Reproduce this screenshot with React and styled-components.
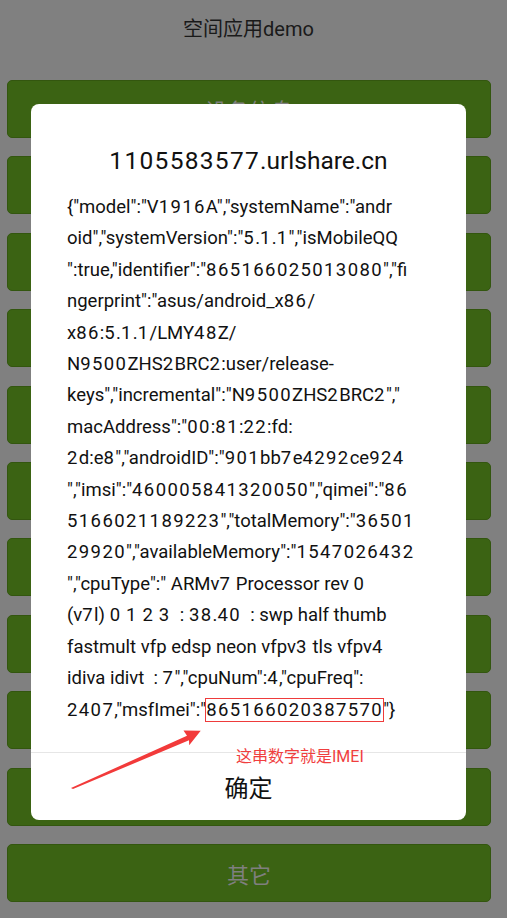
import React from 'react';
import styled, { createGlobalStyle } from 'styled-components';

const GlobalStyle = createGlobalStyle`
  html, body {
    margin: 0;
    padding: 0;
    background: #808080;
    font-family: Roboto, "Noto Sans CJK SC", sans-serif;
  }
`;

// only the first and the last button peek out from behind the dialog
const buttons = ['设备信息', '', '', '', '', '', '', '', '', '', '其它'];

const lines = [
  '{"model":"V1916A","systemName":"andr',
  'oid","systemVersion":"5.1.1","isMobileQQ',
  '":true,"identifier":"865166025013080","fi',
  'ngerprint":"asus/android_x86/',
  'x86:5.1.1/LMY48Z/',
  'N9500ZHS2BRC2:user/release-',
  'keys","incremental":"N9500ZHS2BRC2","',
  'macAddress":"00:81:22:fd:',
  '2d:e8","androidID":"901bb7e4292ce924',
  '","imsi":"460005841320050","qimei":"86',
  '5166021189223","totalMemory":"36501',
  '29920","availableMemory":"1547026432',
  '","cpuType":" ARMv7 Processor rev 0',
  '(v7l) 0 1 2 3  : 38.40  : swp half thumb',
  'fastmult vfp edsp neon vfpv3 tls vfpv4',
  'idiva idivt  : 7","cpuNum":4,"cpuFreq":',
];

const Page = styled.div`
  position: relative;
  width: 507px;
  height: 918px;
  overflow: hidden;
  background: #808080;
`;

const Header = styled.div`
  height: 55px;
  padding-right: 10px;
  display: flex;
  align-items: center;
  justify-content: center;
  font-size: 20px;
  color: #1a1a1a;
`;

const ButtonList = styled.div`
  display: flex;
  flex-direction: column;
  gap: 18.4px;
  padding: 25px 16px 0 7px;
`;

const GreenButton = styled.div`
  height: 58px;
  box-sizing: border-box;
  border: 1px solid #33560f;
  border-radius: 5px;
  background: #3b6313;
  color: #7f7f7f;
  font-size: 22px;
  display: flex;
  align-items: center;
  justify-content: center;
`;

const Overlay = styled.div`
  position: absolute;
  inset: 0;
  padding: 104px 0 0 31px;
`;

const Dialog = styled.div`
  width: 435px;
  height: 716px;
  box-sizing: border-box;
  background: #fff;
  border-radius: 8px;
  display: flex;
  flex-direction: column;
`;

const DialogTitle = styled.div`
  padding-top: 42px;
  height: 30px;
  line-height: 30px;
  text-align: center;
  font-size: 24.5px;
  color: #111;
`;

const Body = styled.div`
  padding: 16px 20px 0 36px;
  font-size: 18.5px;
  line-height: 31.4px;
  color: #111;
  flex: 1;
`;

const Line = styled.div`
  white-space: pre;
`;

// the phone font draws its figures wider than Roboto does
const Num = styled.span`
  letter-spacing: ${(p) => (p.$wide ? '1.3px' : '1.4px')};
`;

const Marked = styled.span`
  border: 1px solid #ee3b3b;
  margin: 0 -1px;
`;

const Footer = styled.div`
  height: 67px;
  border-top: 1px solid #e6e6e6;
  display: flex;
  align-items: center;
  justify-content: center;
  font-size: 24px;
  color: #111;
`;

const Note = styled.div`
  position: absolute;
  left: 236px;
  top: 747px;
  font-size: 16px;
  line-height: 20px;
  color: #f03e3e;
`;

const Arrow = styled.svg`
  position: absolute;
  left: 60px;
  top: 720px;
`;

const withNums = (text, wide) =>
  text.split(/(\d+)/).map((part, i) =>
    i % 2 ? (
      <Num key={i} $wide={wide}>
        {part}
      </Num>
    ) : (
      part
    )
  );

export default function App() {
  return (
    <Page>
      <GlobalStyle />
      <Header>空间应用demo</Header>
      <ButtonList>
        {buttons.map((b, i) => (
          <GreenButton key={i}>{b}</GreenButton>
        ))}
      </ButtonList>
      <Overlay>
        <Dialog>
          <DialogTitle>{withNums('1105583577.urlshare.cn', true)}</DialogTitle>
          <Body>
            {lines.map((l, i) => (
              <Line key={i}>{withNums(l)}</Line>
            ))}
            <Line>
              {withNums('2407,"msfImei":"')}
              <Marked>
                <Num>865166020387570</Num>
              </Marked>
              "{'}'}
            </Line>
          </Body>
          <Footer>确定</Footer>
        </Dialog>
      </Overlay>
      <Note>这串数字就是IMEI</Note>
      <Arrow width="150" height="80" viewBox="0 0 150 80">
        <polygon
          points="11,68 127,15.7 123.5,10.5 140.7,10.7 129.2,25.3 129,20.3 13,69"
          fill="#f23a3a"
        />
      </Arrow>
    </Page>
  );
}
